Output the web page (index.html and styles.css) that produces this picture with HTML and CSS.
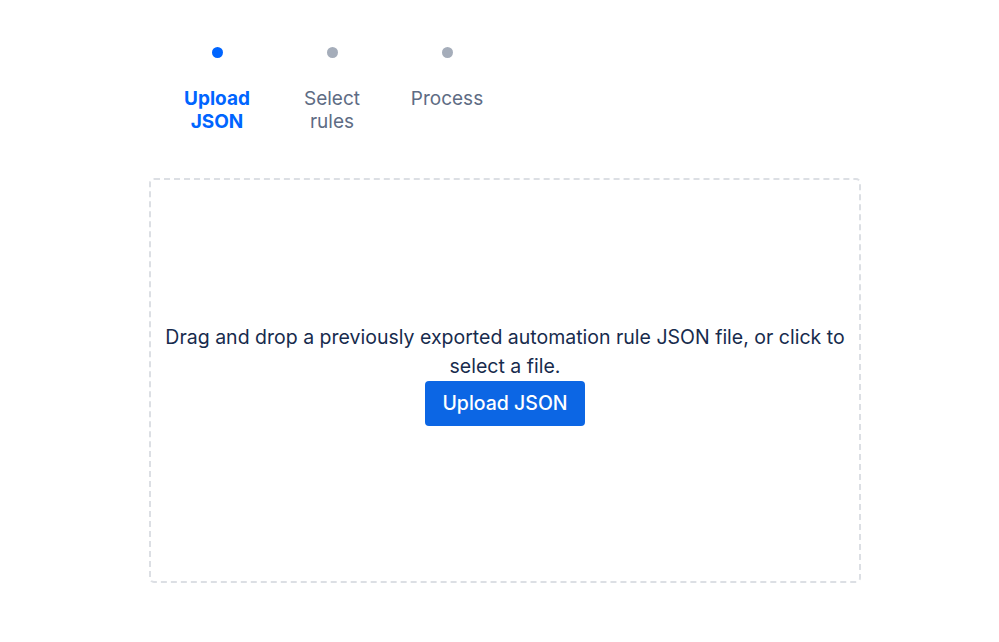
FILE: index.html
```html
<!DOCTYPE html>
<html>
<head>
<meta charset="utf-8">
<link rel="stylesheet" href="styles.css">
</head>
<body>
<div class="page">
  <ol class="steps">
    <li class="step active"><span class="dot"></span><span class="label">Upload JSON</span></li>
    <li class="step"><span class="dot"></span><span class="label">Select rules</span></li>
    <li class="step"><span class="dot"></span><span class="label">Process</span></li>
  </ol>
  <div class="dropzone">
    <p class="hint">Drag and drop a previously exported automation rule JSON file, or click to select a file.</p>
    <button class="upload">Upload JSON</button>
  </div>
</div>
</body>
</html>
```
FILE: styles.css
```css
html, body { margin: 0; padding: 0; background: #fff; }
body { font-family: Inter, "Noto Sans", sans-serif; color: #172b4d; }
.page { width: 712px; margin-left: 149px; padding-top: 47px; }
.steps { list-style: none; margin: 0; padding: 0 0 0 18px; display: grid; grid-template-columns: repeat(3, 100px); column-gap: 15px; }
.step { display: flex; flex-direction: column; align-items: center; text-align: center; }
.dot { width: 11px; height: 11px; border-radius: 50%; background: #a5adba; }
.step.active .dot { background: #0065ff; }
.label { margin-top: 29px; font-size: 19px; line-height: 23px; color: #5e6c84; }
.step.active .label { color: #0065ff; font-weight: 700; }
.dropzone { box-sizing: border-box; margin-top: 45px; height: 405px; padding-bottom: 13px; border: 2px dashed #dcdfe4; border-radius: 5px; display: flex; flex-direction: column; align-items: center; justify-content: center; }
.hint { margin: 0; font-size: 19.5px; line-height: 29px; text-align: center; padding: 0 14px; }
.upload { margin-top: 0; width: 160px; height: 45px; border: 0; border-radius: 4px; background: #0c66e4; color: #fff; font-family: inherit; font-size: 19.5px; font-weight: 500; }
```
